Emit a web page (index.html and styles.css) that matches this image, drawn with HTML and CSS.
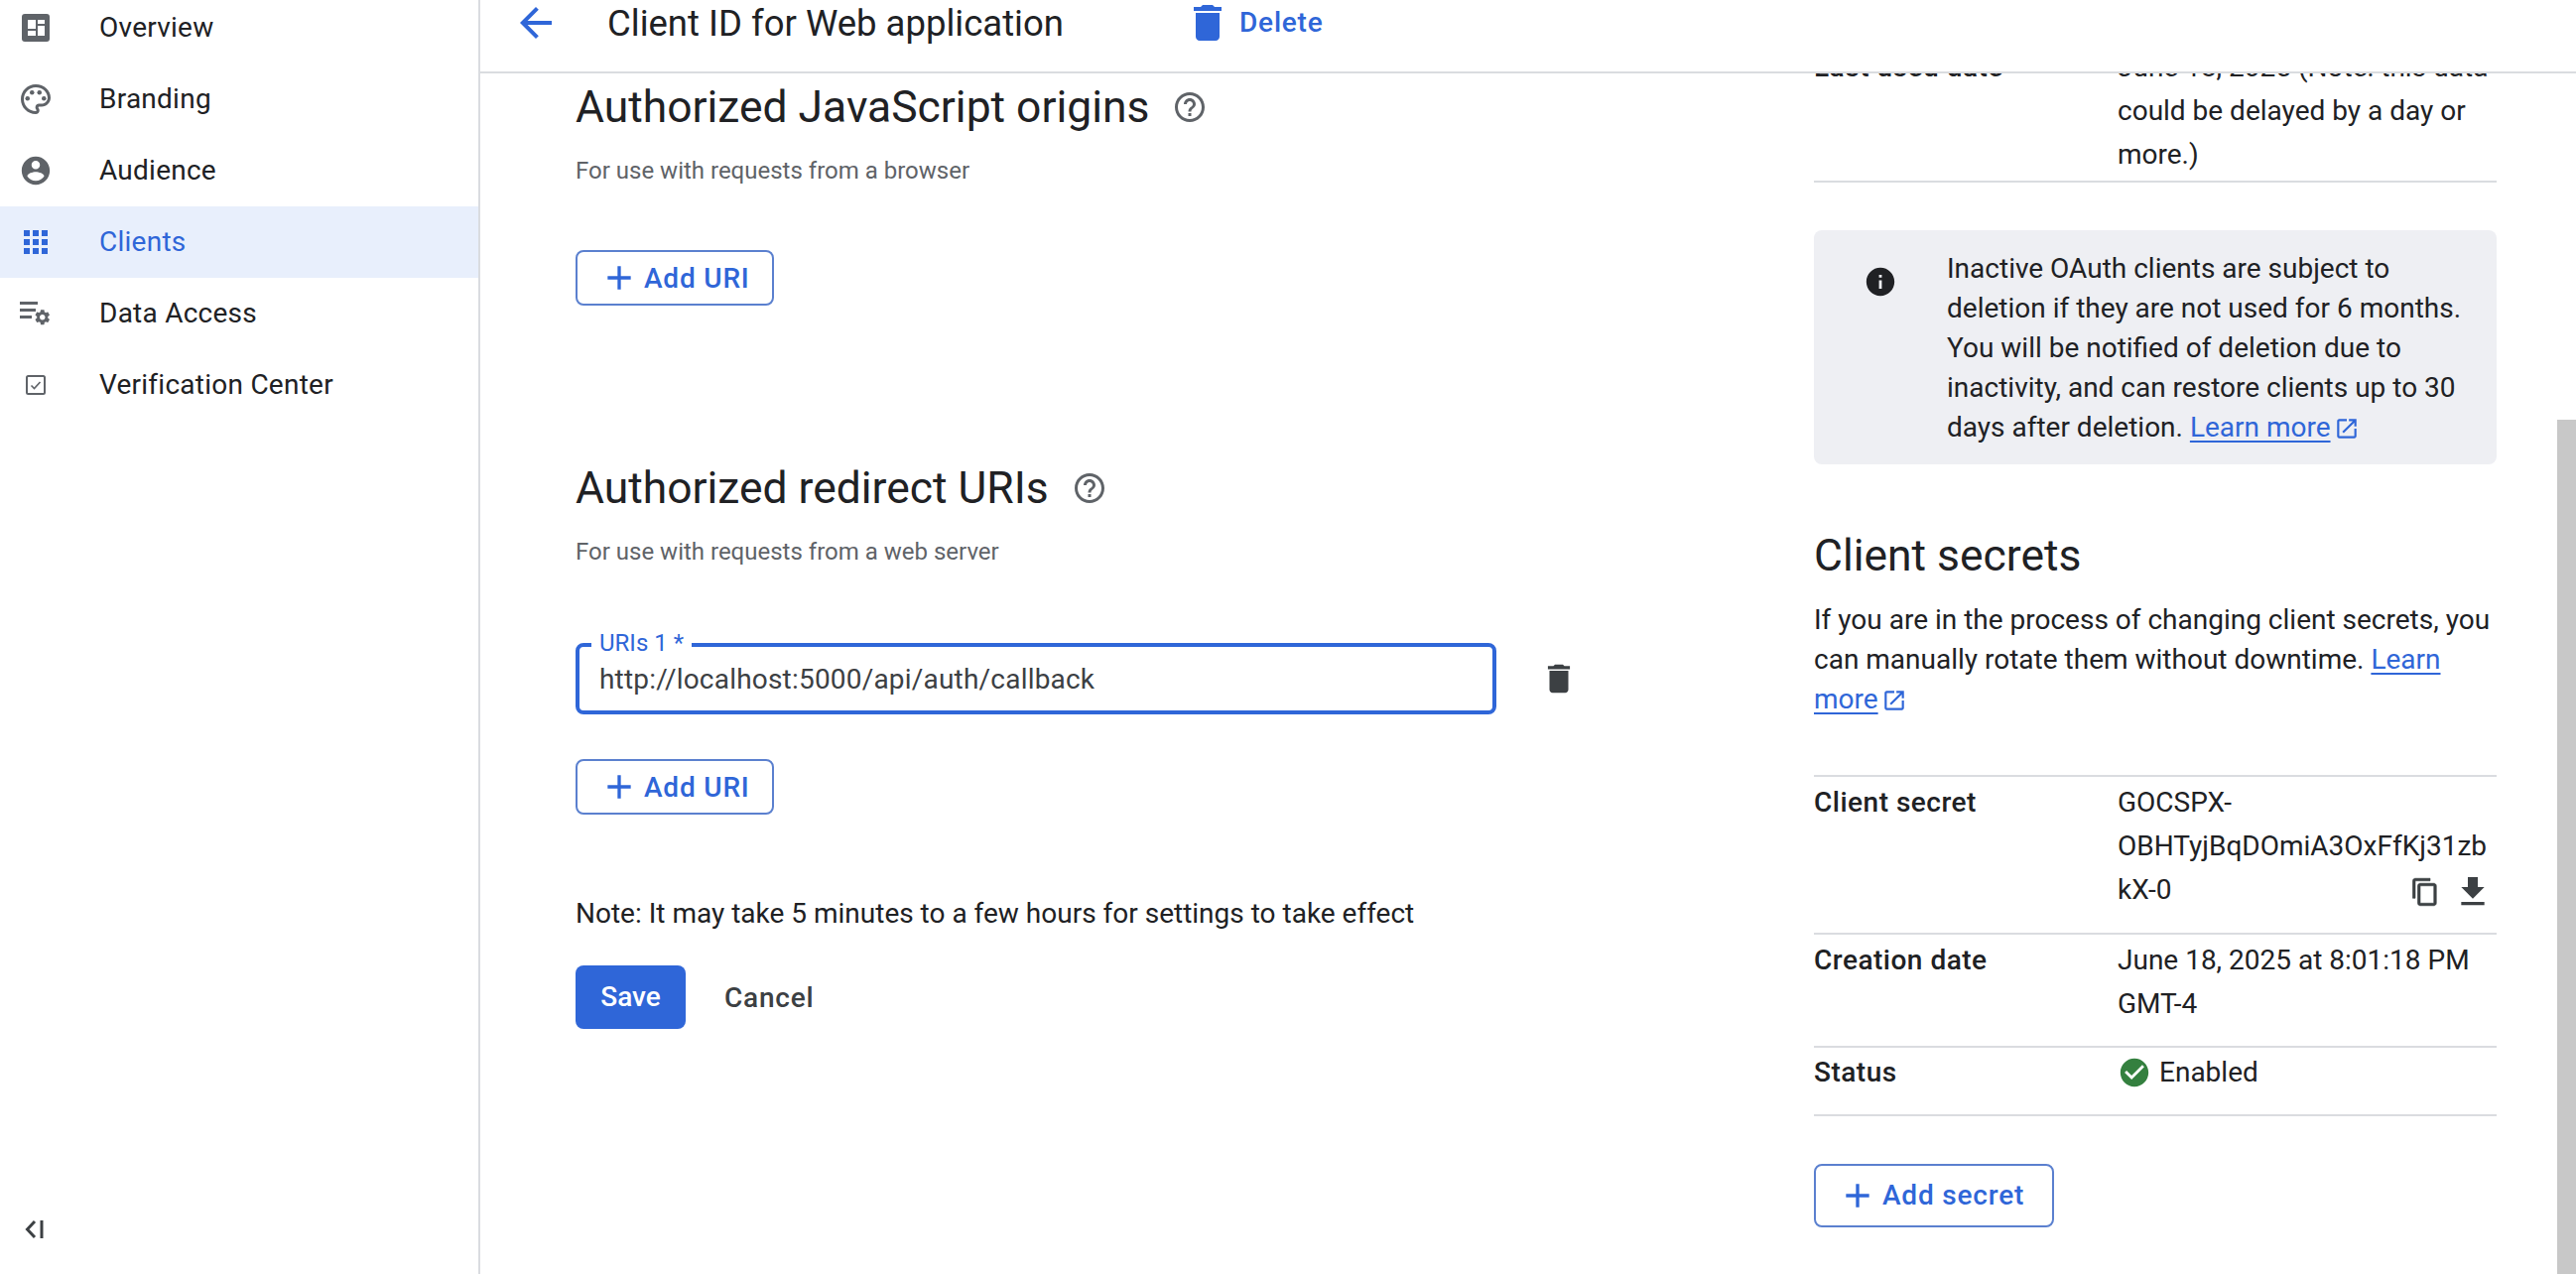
FILE: index.html
```html
<!DOCTYPE html>
<html lang="en">
<head>
    <meta charset="UTF-8">
    <meta name="viewport" content="width=device-width, initial-scale=1.0">
    <title>Client ID for Web application</title>
    <link rel="stylesheet" href="styles.css">
</head>
<body>

    <div id="sidebar">
        <div class="navList">
            <a class="navItem">
                <span class="navIcon">
                    <svg width="28" height="28" viewBox="0 0 28 28"><rect width="28" height="28" rx="3" fill="#5f6368"/><path d="M6 6h8v9H6zM16 6h7v4h-7zM16 12h7v10h-7zM6 17h8v5H6z" fill="#fff"/></svg>
                </span>
                <span>Overview</span>
            </a>
            <a class="navItem">
                <span class="navIcon">
                    <svg width="36" height="36" viewBox="0 0 24 24" fill="#5f6368"><path d="M12 22C6.49 22 2 17.51 2 12S6.49 2 12 2s10 4.04 10 9c0 3.31-2.69 6-6 6h-1.77c-.28 0-.5.22-.5.5 0 .12.05.23.13.33.41.47.64 1.06.64 1.67 0 1.38-1.12 2.5-2.5 2.5zm0-18c-4.41 0-8 3.59-8 8s3.59 8 8 8c.28 0 .5-.22.5-.5 0-.16-.08-.28-.14-.35-.41-.46-.63-1.05-.63-1.65 0-1.38 1.12-2.5 2.5-2.5H16c2.21 0 4-1.79 4-4 0-3.86-3.59-7-8-7z"/><circle cx="6.5" cy="11.5" r="1.5"/><circle cx="9.5" cy="7.5" r="1.5"/><circle cx="14.5" cy="7.5" r="1.5"/><circle cx="17.5" cy="11.5" r="1.5"/></svg>
                </span>
                <span>Branding</span>
            </a>
            <a class="navItem">
                <span class="navIcon">
                    <svg width="34" height="34" viewBox="0 0 24 24" fill="#5f6368"><path d="M12 2C6.48 2 2 6.48 2 12s4.48 10 10 10 10-4.48 10-10S17.52 2 12 2zm0 3c1.66 0 3 1.34 3 3s-1.34 3-3 3-3-1.34-3-3 1.34-3 3-3zm0 14.2c-2.5 0-4.71-1.28-6-3.22.03-1.99 4-3.08 6-3.08 1.99 0 5.97 1.09 6 3.08-1.29 1.94-3.5 3.22-6 3.22z"/></svg>
                </span>
                <span>Audience</span>
            </a>
            <a class="navItem active">
                <span class="navIcon">
                    <svg width="36" height="36" viewBox="0 0 24 24" fill="#2f66d8"><path d="M4 8h4V4H4v4zm6 12h4v-4h-4v4zm-6 0h4v-4H4v4zm0-6h4v-4H4v4zm6 0h4v-4h-4v4zm6-10v4h4V4h-4zm-6 4h4V4h-4v4zm6 6h4v-4h-4v4zm0 6h4v-4h-4v4z"/></svg>
                </span>
                <span>Clients</span>
            </a>
            <a class="navItem">
                <span class="navIcon">
                    <svg width="32" height="26" viewBox="0 0 32 26" fill="#5f6368"><path d="M0 1h18v3H0zM0 8h16v3H0zM0 15h12v3H0z"/><g transform="translate(13.5 7.5) scale(0.77)"><path d="M19.14 12.94c.04-.3.06-.61.06-.94 0-.32-.02-.64-.07-.94l2.03-1.58c.18-.14.23-.41.12-.61l-1.92-3.32c-.12-.22-.37-.29-.59-.22l-2.39.96c-.5-.38-1.03-.7-1.62-.94l-.36-2.54c-.04-.24-.24-.41-.48-.41h-3.84c-.24 0-.43.17-.47.41l-.36 2.54c-.59.24-1.13.57-1.62.94l-2.39-.96c-.22-.08-.47 0-.59.22L2.74 8.87c-.12.21-.08.47.12.61l2.03 1.58c-.05.3-.09.63-.09.94s.02.64.07.94l-2.03 1.58c-.18.14-.23.41-.12.61l1.92 3.32c.12.22.37.29.59.22l2.39-.96c.5.38 1.03.7 1.62.94l.36 2.54c.05.24.24.41.48.41h3.84c.24 0 .44-.17.47-.41l.36-2.54c.59-.24 1.13-.56 1.62-.94l2.39.96c.22.08.47 0 .59-.22l1.92-3.32c.12-.22.07-.47-.12-.61l-2.01-1.58zM12 15.6c-1.98 0-3.6-1.62-3.6-3.6s1.62-3.6 3.6-3.6 3.6 1.62 3.6 3.6-1.62 3.6-3.6 3.6z"/></g></svg>
                </span>
                <span>Data Access</span>
            </a>
            <a class="navItem">
                <span class="navIcon">
                    <svg width="20" height="20" viewBox="0 0 20 20" fill="none" stroke="#5f6368"><rect x="1" y="1" width="18" height="18" rx="1.5" stroke-width="2"/><path d="M5.5 10.5l3 3 6-6.5" stroke-width="1.6"/></svg>
                </span>
                <span>Verification Center</span>
            </a>
        </div>
        <div id="collapse">
            <svg width="20" height="20" viewBox="0 0 20 20" fill="none" stroke="#3c4043" stroke-width="3"><path d="M10 2l-7.500 8 7.500 8"/><path d="M17 1v18"/></svg>
        </div>
    </div>

    <div id="main">
        <div id="header">
            <svg class="backIcon" width="48" height="48" viewBox="0 0 24 24" fill="#2f66d8"><path d="M20 11H7.830l5.590-5.590L12 4l-8 8 8 8 1.410-1.410L7.830 13H20v-2z"/></svg>
            <div id="title">Client ID for Web application</div>
            <a class="deleteLink">
                <svg width="48" height="48" viewBox="0 0 24 24" fill="#2f66d8"><path d="M6 19c0 1.100.9 2 2 2h8c1.100 0 2-.9 2-2V7H6v12zM19 4h-3.500l-1-1h-5l-1 1H5v2h14V4z"/></svg>
                <span>Delete</span>
            </a>
        </div>

        <div id="scrollArea">
            <div id="container">
                <!-- LEFT COLUMN -->
                <div id="formColumn">
                    <div class="sectionTitle">
                        <h2>Authorized JavaScript origins</h2>
                        <svg width="36" height="36" viewBox="0 0 24 24" fill="#5f6368"><path d="M11 18h2v-2h-2v2zm1-16C6.480 2 2 6.480 2 12s4.480 10 10 10 10-4.480 10-10S17.520 2 12 2zm0 18c-4.410 0-8-3.590-8-8s3.590-8 8-8 8 3.590 8 8-3.590 8-8 8zm0-14c-2.210 0-4 1.790-4 4h2c0-1.100.9-2 2-2s2 .9 2 2c0 2-3 1.750-3 5h2c0-2.250 3-2.500 3-5 0-2.210-1.790-4-4-4z"/></svg>
                    </div>
                    <p class="hint">For use with requests from a browser</p>
                    <a class="outlineBtn firstAdd">
                        <svg width="40" height="40" viewBox="0 0 24 24" fill="#2f66d8"><path d="M19 13h-6v6h-2v-6H5v-2h6V5h2v6h6v2z"/></svg>
                        <span>Add URI</span>
                    </a>

                    <div class="sectionTitle redirectTitle">
                        <h2>Authorized redirect URIs</h2>
                        <svg width="36" height="36" viewBox="0 0 24 24" fill="#5f6368"><path d="M11 18h2v-2h-2v2zm1-16C6.480 2 2 6.480 2 12s4.480 10 10 10 10-4.480 10-10S17.520 2 12 2zm0 18c-4.410 0-8-3.590-8-8s3.590-8 8-8 8 3.590 8 8-3.590 8-8 8zm0-14c-2.210 0-4 1.790-4 4h2c0-1.100.9-2 2-2s2 .9 2 2c0 2-3 1.750-3 5h2c0-2.250 3-2.500 3-5 0-2.210-1.790-4-4-4z"/></svg>
                    </div>
                    <p class="hint">For use with requests from a web server</p>

                    <div class="uriRow">
                        <div class="uriField">
                            <label class="uriLabel">URIs 1 *</label>
                            <span class="uriValue">http://localhost:5000/api/auth/callback</span>
                        </div>
                        <svg width="38" height="38" viewBox="0 0 24 24" fill="#3c4043"><path d="M6 19c0 1.100.9 2 2 2h8c1.100 0 2-.9 2-2V7H6v12zM19 4h-3.500l-1-1h-5l-1 1H5v2h14V4z"/></svg>
                    </div>

                    <a class="outlineBtn">
                        <svg width="40" height="40" viewBox="0 0 24 24" fill="#2f66d8"><path d="M19 13h-6v6h-2v-6H5v-2h6V5h2v6h6v2z"/></svg>
                        <span>Add URI</span>
                    </a>

                    <p class="note">Note: It may take 5 minutes to a few hours for settings to take effect</p>

                    <div class="actions">
                        <a class="saveBtn">Save</a>
                        <a class="cancelBtn">Cancel</a>
                    </div>
                </div>

                <!-- RIGHT COLUMN -->
                <div id="infoColumn">
                    <div class="infoRow lastUsed">
                        <div class="infoLabel">Last used date</div>
                        <div class="infoValue">June 18, 2025 (Note: this data could be delayed by a day or more.)</div>
                    </div>

                    <div class="notice">
                        <div class="noticeIcon">
                            <svg width="34" height="34" viewBox="0 0 24 24" fill="#202124"><path d="M12 2C6.480 2 2 6.480 2 12s4.480 10 10 10 10-4.480 10-10S17.520 2 12 2zm1 15h-2v-6h2v6zm0-8h-2V7h2v2z"/></svg>
                        </div>
                        <div class="noticeText">
                            Inactive OAuth clients are subject to deletion if they are not used for 6 months. You will be notified of deletion due to inactivity, and can restore clients up to 30 days after deletion.
                            <a class="learnMore">Learn more</a><svg class="extIcon" width="26" height="26" viewBox="0 0 24 24" fill="#2f66d8"><path d="M19 19H5V5h7V3H5c-1.110 0-2 .9-2 2v14c0 1.100.89 2 2 2h14c1.100 0 2-.9 2-2v-7h-2v7zM14 3v2h3.590l-9.830 9.830 1.410 1.410L19 6.410V10h2V3h-7z"/></svg>
                        </div>
                    </div>

                    <h2 class="secretsTitle">Client secrets</h2>
                    <p class="secretsText">
                        If you are in the process of changing client secrets, you can manually rotate them without downtime.
                        <a class="learnMore">Learn more</a><svg class="extIcon" width="26" height="26" viewBox="0 0 24 24" fill="#2f66d8"><path d="M19 19H5V5h7V3H5c-1.110 0-2 .9-2 2v14c0 1.100.89 2 2 2h14c1.100 0 2-.9 2-2v-7h-2v7zM14 3v2h3.590l-9.830 9.830 1.410 1.410L19 6.410V10h2V3h-7z"/></svg>
                    </p>

                    <div class="infoTable">
                        <div class="infoRow">
                            <div class="infoLabel">Client secret</div>
                            <div class="infoValue">
                                <div class="secretText">GOCSPX-<br>OBHTyjBqDOmiA3OxFfKj31zb</div>
                                <div class="secretLast">
                                    <span>kX-0</span>
                                    <span class="secretIcons">
                                        <svg width="30" height="30" viewBox="0 0 24 24" fill="#3c4043" stroke="#3c4043" stroke-width="0.5"><path d="M16 1H4c-1.100 0-2 .9-2 2v14h2V3h12V1zm3 4H8c-1.100 0-2 .9-2 2v14c0 1.100.9 2 2 2h11c1.100 0 2-.9 2-2V7c0-1.100-.9-2-2-2zm0 16H8V7h11v14z"/></svg>
                                        <svg width="40" height="40" viewBox="0 0 24 24" fill="#3c4043"><path d="M19 9h-4V3H9v6H5l7 7 7-7zM5 18v2h14v-2H5z"/></svg>
                                    </span>
                                </div>
                            </div>
                        </div>
                        <div class="infoRow creationRow">
                            <div class="infoLabel">Creation date</div>
                            <div class="infoValue">June 18, 2025 at 8:01:18 PM GMT-4</div>
                        </div>
                        <div class="infoRow statusRow">
                            <div class="infoLabel">Status</div>
                            <div class="infoValue statusValue">
                                <svg width="34" height="34" viewBox="0 0 24 24" fill="#34803f"><path d="M12 2C6.480 2 2 6.480 2 12s4.480 10 10 10 10-4.480 10-10S17.520 2 12 2zm-2 15l-5-5 1.410-1.410L10 14.170l7.590-7.590L19 8l-9 9z"/></svg>
                                <span>Enabled</span>
                            </div>
                        </div>
                    </div>

                    <a class="outlineBtn secretBtn">
                        <svg width="40" height="40" viewBox="0 0 24 24" fill="#2f66d8"><path d="M19 13h-6v6h-2v-6H5v-2h6V5h2v6h6v2z"/></svg>
                        <span>Add secret</span>
                    </a>
                </div>
            </div>
            <div id="scrollThumb"></div>
        </div>
    </div>

</body>
</html>
```

FILE: styles.css
```css
* {
    box-sizing: border-box;
}

html, body {
    height: 100%;
}

body {
    margin: 0;
    display: flex;
    overflow: hidden;
    background-color: white;
    color: #202124;
    font-family: Roboto, sans-serif;
}

h2, p {
    margin: 0;
}

/* SIDEBAR */
#sidebar {
    width: 484px;
    flex-shrink: 0;
    display: flex;
    flex-direction: column;
    justify-content: space-between;
    border-right: 2px solid #dadce0;
}

.navList {
    margin-top: -8px;
}

.navItem {
    display: flex;
    align-items: center;
    height: 72px;
    padding-bottom: 1px;
    font-size: 28px;
    letter-spacing: 0.25px;
}

.navItem.active {
    background-color: #e8effc;
    color: #2f66d8;
}

.navIcon {
    width: 72px;
    margin-right: 28px;
    display: flex;
    justify-content: center;
    align-items: center;
}

#collapse {
    display: flex;
    padding: 0 0 35px 25px;
}

/* HEADER */
#main {
    flex: 1;
    min-width: 0;
    display: flex;
    flex-direction: column;
}

#header {
    height: 74px;
    flex-shrink: 0;
    display: flex;
    align-items: flex-start;
    border-bottom: 2px solid #dadce0;
}

.backIcon {
    margin-left: 32px;
    margin-right: 48px;
}

#header svg {
    margin-top: -1px;
}

#title {
    font-size: 36.5px;
    line-height: 48px;
    width: 581px;
}

.deleteLink {
    display: flex;
    align-items: flex-start;
    color: #2f66d8;
    font-size: 28px;
    font-weight: 500;
    letter-spacing: 0.8px;
    line-height: 46px;
}

.deleteLink span {
    margin-left: 8px;
}

/* MAIN CONTENT */
#scrollArea {
    flex: 1;
    min-height: 0;
    position: relative;
    overflow: hidden;
}

#scrollThumb {
    position: absolute;
    top: 349px;
    right: 0;
    bottom: 0;
    width: 19px;
    background-color: #c8c8c8;
}

#container {
    display: flex;
    padding-left: 96px;
}

#formColumn {
    width: 1248px;
    flex-shrink: 0;
    padding-top: 8px;
}

.sectionTitle {
    display: flex;
    align-items: center;
    gap: 23px;
    height: 52px;
}

.sectionTitle h2 {
    font-size: 44.4px;
    font-weight: 400;
}

.redirectTitle {
    margin-top: 158px;
}

.hint {
    margin-top: 21px;
    font-size: 24px;
    line-height: 34px;
    color: #5f6368;
}

.outlineBtn {
    display: flex;
    align-items: center;
    width: fit-content;
    height: 56px;
    padding: 0 22px 0 22px;
    border: 2px solid #5b80cf;
    border-radius: 8px;
    color: #2f66d8;
    font-size: 28px;
    font-weight: 500;
    letter-spacing: 0.8px;
}

.outlineBtn svg {
    margin-right: 5px;
}

.firstAdd {
    margin-top: 63px;
}

.uriRow {
    display: flex;
    align-items: center;
    gap: 44px;
    margin-top: 75px;
}

.uriField {
    position: relative;
    width: 928px;
    height: 72px;
    display: flex;
    align-items: center;
    padding-left: 20px;
    border: 4px solid #2f66d8;
    border-radius: 8px;
}

.uriLabel {
    position: absolute;
    top: -17px;
    left: 12px;
    padding: 0 8px;
    background-color: white;
    color: #2f66d8;
    font-size: 24px;
    line-height: 26px;
}

.uriValue {
    font-size: 28px;
    letter-spacing: 0.2px;
    color: #3c4043;
}

.uriRow + .outlineBtn {
    margin-top: 45px;
}

.note {
    margin-top: 82px;
    font-size: 28px;
    line-height: 36px;
}

.actions {
    display: flex;
    align-items: center;
    margin-top: 34px;
}

.saveBtn {
    width: 111px;
    height: 64px;
    line-height: 64px;
    text-align: center;
    border-radius: 8px;
    background-color: #2f66d8;
    color: white;
    font-size: 28px;
    font-weight: 500;
}

.cancelBtn {
    margin-left: 39px;
    color: #3c4043;
    font-size: 28px;
    font-weight: 500;
    letter-spacing: 0.8px;
}

/* RIGHT COLUMN */
#infoColumn {
    width: 688px;
    flex-shrink: 0;
    font-size: 28px;
    line-height: 44px;
}

.lastUsed {
    margin-top: -28px;
    border-bottom: 2px solid #dadce0;
}

.infoRow {
    display: flex;
    padding-bottom: 4px;
}

.infoLabel {
    width: 306px;
    flex-shrink: 0;
    font-weight: 500;
    letter-spacing: 0.5px;
}

.infoValue {
    flex: 1;
    min-width: 0;
}

.notice {
    display: flex;
    margin-top: 48px;
    height: 236px;
    padding: 19px 28px 0 0;
    border-radius: 8px;
    background-color: #eeeff3;
    line-height: 40px;
}

.noticeIcon {
    width: 134px;
    flex-shrink: 0;
    display: flex;
    justify-content: center;
    padding-top: 16px;
    height: 51px;
}

.learnMore {
    color: #2f66d8;
    text-decoration: underline;
    text-underline-offset: 4px;
}

.extIcon {
    vertical-align: -5px;
    margin-left: 3px;
}

.secretsTitle {
    margin-top: 66px;
    font-size: 44.4px;
    font-weight: 400;
    line-height: 52px;
}

.secretsText {
    margin-top: 19px;
    line-height: 40px;
}

.infoTable {
    margin-top: 56px;
    border-top: 2px solid #dadce0;
}

.infoTable .infoRow {
    padding: 4px 0 21px;
    border-bottom: 2px solid #dadce0;
}

.infoTable .creationRow {
    padding-bottom: 20px;
}

.infoTable .statusRow {
    padding-top: 3px;
    padding-bottom: 20px;
}

.secretLast {
    display: flex;
    justify-content: space-between;
    align-items: center;
    height: 44px;
}

.secretIcons {
    display: flex;
    align-items: center;
    gap: 13px;
    height: 44px;
    margin-top: 4px;
    margin-right: 4px;
}

.statusValue {
    display: flex;
    align-items: center;
    gap: 8px;
    height: 44px;
}

.secretBtn {
    margin-top: 48px;
    height: 64px;
    padding-right: 28px;
}
```
